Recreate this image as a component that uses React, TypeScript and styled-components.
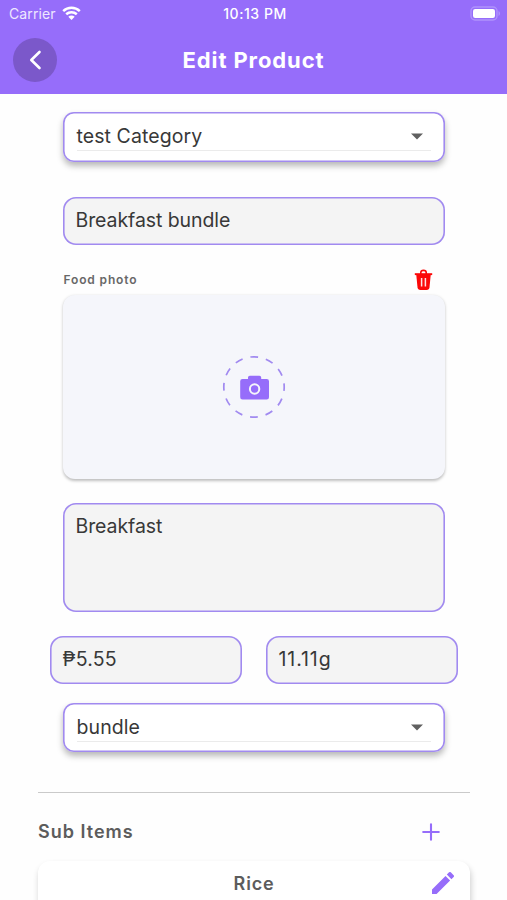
import React from "react";
import styled, { createGlobalStyle } from "styled-components";

const purple = "#966dfa";
const outline = "#a18af0";

const GlobalStyle = createGlobalStyle`
  *, *::before, *::after { box-sizing: border-box; }
  body {
    margin: 0;
    background: #fff;
    font-family: Inter, Roboto, sans-serif;
    overflow: hidden;
  }
`;

const Screen = styled.div`
  width: 507px;
  height: 900px;
  overflow: hidden;
  background: #fefefe;
`;

const Header = styled.header`
  height: 94px;
  background: ${purple};
  color: #fff;
`;

const StatusBar = styled.div`
  display: grid;
  grid-template-columns: 1fr auto 1fr;
  align-items: center;
  height: 28px;
  padding: 0 6px 2px 9px;
`;

const Carrier = styled.div`
  display: flex;
  align-items: center;
  gap: 6px;
  font-size: 14px;
  letter-spacing: 0.1px;
  color: #eee7ff;
`;

const Clock = styled.div`
  font-size: 14px;
  font-weight: 500;
  letter-spacing: 0.55px;
`;

const BatterySlot = styled.div`
  display: flex;
  justify-content: flex-end;
`;

const NavBar = styled.div`
  display: grid;
  grid-template-columns: 44px 1fr 44px;
  align-items: center;
  height: 64px;
  padding: 0 13px;
`;

const BackButton = styled.button`
  display: flex;
  align-items: center;
  justify-content: center;
  width: 44px;
  height: 44px;
  padding: 0;
  border: 0;
  border-radius: 50%;
  background: #7b58ca;
`;

const Title = styled.h1`
  margin: 0;
  text-align: center;
  font-size: 22px;
  line-height: 28px;
  font-weight: 700;
  letter-spacing: 0.9px;
`;

const Form = styled.main`
  display: flex;
  flex-direction: column;
  padding: 18px 62.5px 0;
`;

const Select = styled.div`
  height: 49.5px;
  padding: 11px 14px 0;
  border-radius: 11px;
  background: #fff;
  box-shadow: inset 0 0 0 1.6px ${outline}, 0 4px 6px rgba(0, 0, 0, 0.28);
`;

const SelectValue = styled.div`
  display: flex;
  align-items: center;
  justify-content: space-between;
  height: 28px;
  padding-right: 8px;
  border-bottom: 1px solid #ebebeb;
  font-size: 19.5px;
  line-height: 27px;
  letter-spacing: 0.08px;
  color: #383838;
`;

const Field = styled.div<{ $height?: number; $tracking?: number }>`
  height: ${(p) => p.$height ?? 48}px;
  padding: 10px 13px;
  border-radius: 13px;
  background: #f4f4f4;
  box-shadow: inset 0 0 0 1.6px ${outline};
  font-size: 19.5px;
  line-height: 26px;
  letter-spacing: ${(p) => p.$tracking ?? 0}px;
  color: #383838;
`;

const NameBlock = styled.div`
  padding: 35.5px 0 21px;
`;

const PhotoHeading = styled.div`
  display: flex;
  align-items: center;
  justify-content: space-between;
  height: 28.5px;
  padding: 0 12px 0 1px;
`;

const PhotoLabel = styled.span`
  padding-bottom: 2px;
  font-size: 12px;
  font-weight: 600;
  letter-spacing: 0.85px;
  color: #686868;
`;

const PhotoBox = styled.div`
  display: flex;
  align-items: center;
  justify-content: center;
  height: 184px;
  margin-bottom: 24px;
  border-radius: 12px;
  background: #f5f6fb;
  box-shadow: 0 1.5px 3px rgba(0, 0, 0, 0.25);
`;

const AmountRow = styled.div`
  display: grid;
  grid-template-columns: 1fr 1fr;
  gap: 24px;
  margin: 24px -13px 19px;
`;

const SubItems = styled.section`
  margin: 40px 37px 0 38px;
  border-top: 1.5px solid #cacaca;
`;

const SubHeading = styled.div`
  display: flex;
  align-items: center;
  justify-content: space-between;
  height: 68px;
  padding: 9px 30px 0 0;
  font-size: 18px;
  font-weight: 600;
  letter-spacing: 1px;
  color: #5c5c5c;
`;

const ItemCard = styled.div`
  display: grid;
  grid-template-columns: 40px 1fr 40px;
  align-items: center;
  justify-items: center;
  height: 80px;
  padding: 0 7px 36px;
  border-radius: 12px;
  background: #fff;
  box-shadow: 1px 4px 6px rgba(0, 0, 0, 0.2);
  font-size: 18px;
  font-weight: 600;
  letter-spacing: 0.8px;
  color: #5c5c5c;
`;

const WifiIcon = () => (
  <svg width="19" height="14" viewBox="0 0 19 14" fill="none" stroke="#fff" strokeWidth="2.5">
    <path d="M1.2 5.1C5.9.7 13.1.7 17.8 5.1" />
    <path d="M4.2 8.2c3-2.700 7.600-2.700 10.600 0" />
    <path d="M9.500 14 6.300 10.700c1.900-1.600 4.500-1.600 6.400 0Z" fill="#fff" stroke="none" />
  </svg>
);

const BatteryIcon = () => (
  <svg width="31" height="15" viewBox="0 0 31 15">
    <rect x="1" y="1" width="26" height="13" rx="4" fill="none" stroke="#b092fc" strokeWidth="1.4" />
    <rect x="3" y="3" width="22" height="9" rx="2.2" fill="#fff" />
    <path d="M28.500 5v5c2-.8 2-4.200 0-5Z" fill="#b092fc" />
  </svg>
);

const BackIcon = () => (
  <svg width="14" height="22" viewBox="0 0 14 22" fill="none" stroke="#fff" strokeWidth="2.6" strokeLinecap="round" strokeLinejoin="round">
    <path d="M11.500 3 3.300 11l8.200 8" />
  </svg>
);

const CaretIcon = () => (
  <svg width="12" height="7" viewBox="0 0 12 7">
    <path d="M0 .5h12L6 6.500Z" fill="#606060" />
  </svg>
);

const TrashIcon = () => (
  <svg width="19" height="22" viewBox="0 0 19 22">
    <path d="M6.800 5V3.600c0-3 5.400-3 5.400 0V5" fill="none" stroke="#fb0808" strokeWidth="1.6" />
    <path d="M.8 4.200h17.400v1.900H.8Z" fill="#fb0808" />
    <path d="M2.300 6h14.400l-1.200 12.300c-.2 1.900-1.200 2.700-2.900 2.700H6.400c-1.700 0-2.700-.8-2.900-2.700Z" fill="#fb0808" />
    <path d="M7.600 9v8.500M11.400 9v8.500" stroke="#ffe1e1" strokeWidth="1.500" />
  </svg>
);

const CameraIcon = () => (
  <svg width="64" height="64" viewBox="0 0 64 64">
    <circle cx="32" cy="32" r="30.200" fill="none" stroke={outline} strokeWidth="1.700" strokeDasharray="7.800 8.013" strokeDashoffset="3.900" />
    <path d="M20.500 24H26v-1.500q0-1.800 1.800-1.800h9.600q1.800 0 1.800 1.800V24h5.500q2.300 0 2.300 2.300v15.900q0 2.300-2.300 2.300H20.500q-2.300 0-2.300-2.300V26.300q0-2.300 2.300-2.300Z" fill={purple} />
    <circle cx="32.600" cy="34" r="4.700" fill="none" stroke="#f5f6fb" strokeWidth="2" />
  </svg>
);

const PlusIcon = () => (
  <svg width="18" height="18" viewBox="0 0 18 18" stroke={purple} strokeWidth="2.100" strokeLinecap="round">
    <path d="M9 1.200v15.600M1.200 9h15.600" />
  </svg>
);

const PencilIcon = () => (
  <svg width="22" height="22" viewBox="3 3 18 18" fill={purple}>
    <path d="M3 17.250V21h3.750L17.810 9.940l-3.750-3.750L3 17.250ZM20.710 7.040a1 1 0 0 0 0-1.410l-2.340-2.340a1 1 0 0 0-1.410 0l-1.830 1.830 3.750 3.750 1.830-1.830Z" />
  </svg>
);

const Dropdown = ({ value }: { value: string }) => (
  <Select>
    <SelectValue>
      <span>{value}</span>
      <CaretIcon />
    </SelectValue>
  </Select>
);

export default function App() {
  return (
    <Screen>
      <GlobalStyle />
      <Header>
        <StatusBar>
          <Carrier>
            Carrier
            <WifiIcon />
          </Carrier>
          <Clock>10:13 PM</Clock>
          <BatterySlot>
            <BatteryIcon />
          </BatterySlot>
        </StatusBar>
        <NavBar>
          <BackButton aria-label="Back">
            <BackIcon />
          </BackButton>
          <Title>Edit Product</Title>
        </NavBar>
      </Header>
      <Form>
        <Dropdown value="test Category" />
        <NameBlock>
          <Field $tracking={-0.08}>Breakfast bundle</Field>
        </NameBlock>
        <PhotoHeading>
          <PhotoLabel>Food photo</PhotoLabel>
          <TrashIcon />
        </PhotoHeading>
        <PhotoBox>
          <CameraIcon />
        </PhotoBox>
        <Field $height={109} $tracking={-0.08}>Breakfast</Field>
        <AmountRow>
          <Field $tracking={0.2}>₱5.55</Field>
          <Field $tracking={0.9}>11.11g</Field>
        </AmountRow>
        <Dropdown value="bundle" />
      </Form>
      <SubItems>
        <SubHeading>
          <span>Sub Items</span>
          <PlusIcon />
        </SubHeading>
        <ItemCard>
          <span />
          <span>Rice</span>
          <PencilIcon />
        </ItemCard>
      </SubItems>
    </Screen>
  );
}
